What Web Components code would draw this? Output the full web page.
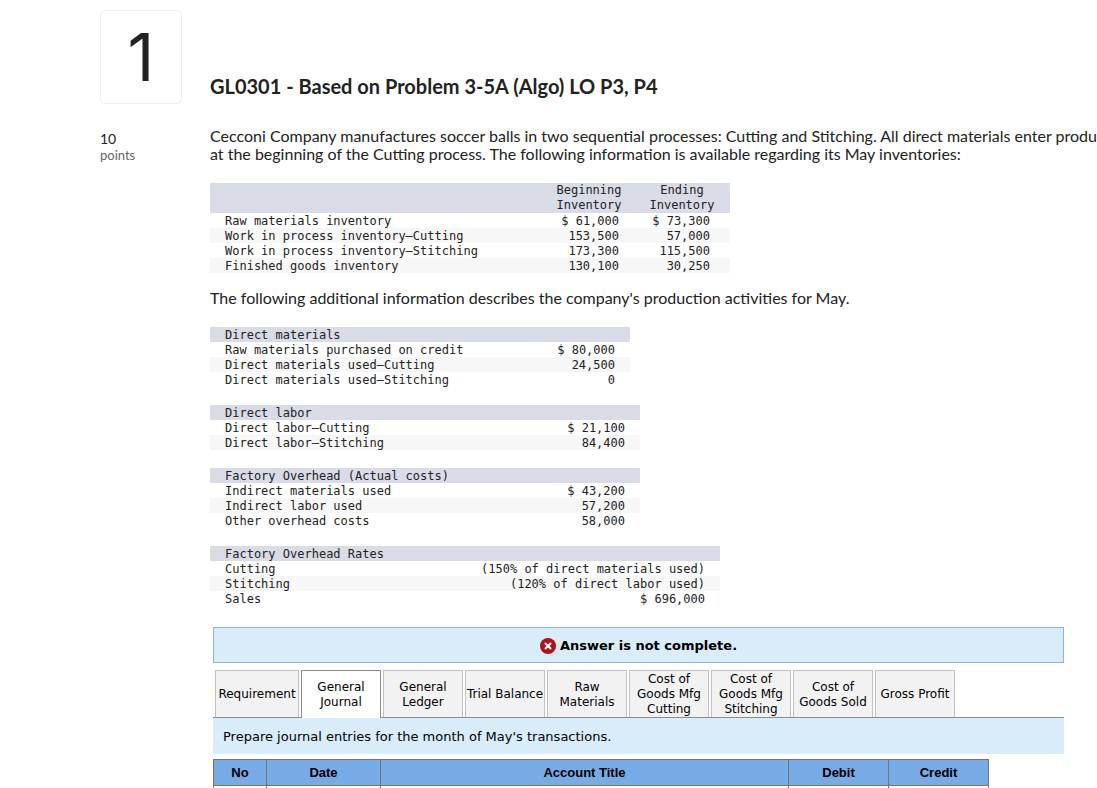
<!DOCTYPE html>
<html lang="en">
<head>
<meta charset="utf-8">
<meta name="viewport" content="width=device-width, initial-scale=1">
<title>GL0301 - Based on Problem 3-5A</title>
<style>
  html { overflow: hidden; background: #fff; }
  body { margin: 0; }
</style>
</head>
<body>
<question-page>
  <question-number slot="side" value="1" points="10"></question-number>
  <h1 slot="title">GL0301 - Based on Problem 3-5A (Algo) LO P3, P4</h1>
  <question-text>Cecconi Company manufactures soccer balls in two sequential processes: Cutting and Stitching. All direct materials enter produ<br>at the beginning of the Cutting process. The following information is available regarding its May inventories:</question-text>
  <fact-table name="inventory"></fact-table>
  <question-text>The following additional information describes the company's production activities for May.</question-text>
  <fact-table name="materials"></fact-table>
  <fact-table name="labor"></fact-table>
  <fact-table name="overhead"></fact-table>
  <fact-table name="rates"></fact-table>
  <answer-area>
    <answer-status slot="status">Answer is not complete.</answer-status>
    <answer-tabs slot="tabs" selected="1"></answer-tabs>
    <span slot="instruction">Prepare journal entries for the month of May's transactions.</span>
    <journal-table></journal-table>
  </answer-area>
</question-page>

<script>
(function() {
  const FACTS = {
    inventory: {
      widths: [334, 90, 96],
      head: ['', 'Beginning<br>Inventory', 'Ending<br>Inventory'],
      rows: [
        ['Raw materials inventory', '$ 61,000', '$ 73,300'],
        ['Work in process inventory—Cutting', '153,500', '57,000'],
        ['Work in process inventory—Stitching', '173,300', '115,500'],
        ['Finished goods inventory', '130,100', '30,250']
      ]
    },
    materials: {
      widths: [300, 120],
      head: ['Direct materials'],
      rows: [
        ['Raw materials purchased on credit', '$ 80,000'],
        ['Direct materials used—Cutting', '24,500'],
        ['Direct materials used—Stitching', '0']
      ]
    },
    labor: {
      widths: [300, 130],
      head: ['Direct labor'],
      rows: [
        ['Direct labor—Cutting', '$ 21,100'],
        ['Direct labor—Stitching', '84,400']
      ]
    },
    overhead: {
      widths: [300, 130],
      head: ['Factory Overhead (Actual costs)'],
      rows: [
        ['Indirect materials used', '$ 43,200'],
        ['Indirect labor used', '57,200'],
        ['Other overhead costs', '58,000']
      ]
    },
    rates: {
      widths: [200, 310],
      head: ['Factory Overhead Rates'],
      rows: [
        ['Cutting', '(150% of direct materials used)'],
        ['Stitching', '(120% of direct labor used)'],
        ['Sales', '$ 696,000']
      ]
    }
  };

  const TABS = [
    'Requirement', 'General Journal', 'General Ledger', 'Trial Balance', 'Raw Materials',
    'Cost of Goods Mfg Cutting', 'Cost of Goods Mfg Stitching', 'Cost of Goods Sold', 'Gross Profit'
  ];

  class BaseElement extends HTMLElement {
    constructor() {
      super();
      this.attachShadow({ mode: 'open' });
    }

    connectedCallback() {
      this.shadowRoot.innerHTML = this.render();
    }
  }

  class QuestionPage extends BaseElement {
    render() {
      return `
        <style>
          :host {
            display: grid;
            grid-template-columns: 110px minmax(0, 1fr);
            padding: 10px 0 0 100px;
            color: #222;
            font-family: Lato, sans-serif;
          }
          ::slotted(h1) {
            margin: 64px 0 0;
            font-size: 20px;
            line-height: 24px;
            font-weight: 700;
            white-space: nowrap;
          }
          .body { padding-top: 31px; }
        </style>
        <aside><slot name="side"></slot></aside>
        <main>
          <slot name="title"></slot>
          <div class="body"><slot></slot></div>
        </main>
      `;
    }
  }

  class QuestionNumber extends BaseElement {
    render() {
      return `
        <style>
          :host { display: block; }
          .number {
            box-sizing: border-box;
            width: 82px;
            height: 94px;
            border: 1px solid #eee;
            border-radius: 5px;
            font: 400 66px/92px Inter, sans-serif;
            text-align: center;
          }
          .points { margin-top: 26px; font-size: 14px; line-height: 17px; }
          .unit { font-size: 13px; line-height: 16px; color: #666; }
        </style>
        <div class="number">${this.getAttribute('value')}</div>
        <div class="points">${this.getAttribute('points')}</div>
        <div class="unit">points</div>
      `;
    }
  }

  class QuestionText extends BaseElement {
    render() {
      return `
        <style>
          :host {
            display: block;
            margin: -2px 0 20px;
            font-size: 16px;
            line-height: 18px;
            white-space: nowrap;
          }
        </style>
        <slot></slot>
      `;
    }
  }

  class FactTable extends BaseElement {
    render() {
      const { widths, head, rows } = FACTS[this.getAttribute('name')];
      const total = widths.reduce((sum, w) => sum + w, 0);
      const span = widths.length - head.length + 1;
      return `
        <style>
          :host { display: block; margin-bottom: 18px; }
          table {
            table-layout: fixed;
            border-collapse: collapse;
            font: 12px/15px "DejaVu Sans Mono", monospace;
          }
          th, td { padding: 0; font-weight: 400; text-align: right; white-space: nowrap; }
          tbody th, tbody td, thead th[colspan="2"] { padding-top: 2px; line-height: 13px; }
          thead tr { background: #d9dce7; }
          thead th { text-align: center; }
          th:first-child { padding-left: 15px; text-align: left; }
          tbody tr:nth-child(even) { background: #f7f7f7; }
          td { padding-right: 15px; }
          td:nth-child(3) { padding-right: 20px; }
        </style>
        <table style="width: ${total}px">
          <colgroup>${widths.map(w => `<col style="width: ${w}px">`).join('')}</colgroup>
          <thead><tr>${head.map(h => `<th scope="col" colspan="${span}">${h}</th>`).join('')}</tr></thead>
          <tbody>
            ${rows.map(([label, ...cells]) => `
              <tr><th scope="row">${label}</th>${cells.map(c => `<td>${c}</td>`).join('')}</tr>
            `).join('')}
          </tbody>
        </table>
      `;
    }
  }

  class AnswerArea extends BaseElement {
    render() {
      return `
        <style>
          :host {
            display: block;
            margin: 21px 33px 0 3px;
            color: #000;
            font: 13px/18px "DejaVu Sans", Verdana, sans-serif;
          }
          .instruction { padding: 10px 10px 8px; background: #d9ecfa; margin-bottom: 5px; }
        </style>
        <slot name="status"></slot>
        <slot name="tabs"></slot>
        <div class="instruction"><slot name="instruction"></slot></div>
        <slot></slot>
      `;
    }
  }

  class AnswerStatus extends BaseElement {
    render() {
      return `
        <style>
          :host {
            display: flex;
            justify-content: center;
            align-items: center;
            gap: 4px;
            height: 32px;
            padding-top: 2px;
            margin-bottom: 7px;
            border: 1px solid #8fb4df;
            background: #d9ecfa;
            font-weight: 700;
          }
        </style>
        <svg width="16" height="16" viewBox="0 0 16 16" aria-hidden="true">
          <circle cx="8" cy="8" r="8" fill="#b31116"/>
          <path d="M5 5l6 6M11 5l-6 6" stroke="#fff" stroke-width="2.2"/>
        </svg>
        <slot></slot>
      `;
    }
  }

  class AnswerTabs extends BaseElement {
    connectedCallback() {
      super.connectedCallback();
      this.buttons = [...this.shadowRoot.querySelectorAll('button')];
      this.buttons.forEach((b, i) => b.addEventListener('click', () => this.select(i)));
      this.select(Number(this.getAttribute('selected')) || 0);
    }

    select(index) {
      this.buttons.forEach((b, i) => b.setAttribute('aria-selected', i === index));
    }

    render() {
      return `
        <style>
          :host { display: block; border-bottom: 1px solid #8c8c8c; }
          div { display: flex; gap: 2px; padding-left: 2px; }
          button {
            box-sizing: border-box;
            width: 80px;
            height: 47px;
            padding: 1px 0 0;
            border: 1px solid #c0c0c0;
            border-bottom: 0;
            border-radius: 0;
            background: #f2f2f2;
            color: #000;
            font: 12px/15px "DejaVu Sans", Verdana, sans-serif;
            cursor: pointer;
          }
          button:first-child { width: 84px; }
          button[aria-selected="true"] {
            height: 48px;
            margin-bottom: -1px;
            padding-bottom: 1px;
            border-color: #8c8c8c;
            background: #fff;
          }
        </style>
        <div role="tablist">
          ${TABS.map(t => `<button type="button" role="tab">${t}</button>`).join('')}
        </div>
      `;
    }
  }

  class JournalTable extends BaseElement {
    render() {
      return `
        <style>
          :host { display: block; }
          table {
            width: 776px;
            table-layout: fixed;
            border-collapse: collapse;
            font: 13px/25px "Liberation Sans", Arial, sans-serif;
          }
          th, td { padding: 0; border: 1px solid #757575; }
          th { background: #77abe5; font-weight: 700; }
          td { height: 25px; }
        </style>
        <table>
          <colgroup>
            <col style="width: 53px"><col style="width: 114px"><col>
            <col style="width: 100px"><col style="width: 100px">
          </colgroup>
          <thead>
            <tr><th>No</th><th>Date</th><th>Account Title</th><th>Debit</th><th>Credit</th></tr>
          </thead>
          <tbody><tr><td></td><td></td><td></td><td></td><td></td></tr></tbody>
        </table>
      `;
    }
  }

  customElements.define('question-page', QuestionPage);
  customElements.define('question-number', QuestionNumber);
  customElements.define('question-text', QuestionText);
  customElements.define('fact-table', FactTable);
  customElements.define('answer-area', AnswerArea);
  customElements.define('answer-status', AnswerStatus);
  customElements.define('answer-tabs', AnswerTabs);
  customElements.define('journal-table', JournalTable);
})();
</script>
</body>
</html>
